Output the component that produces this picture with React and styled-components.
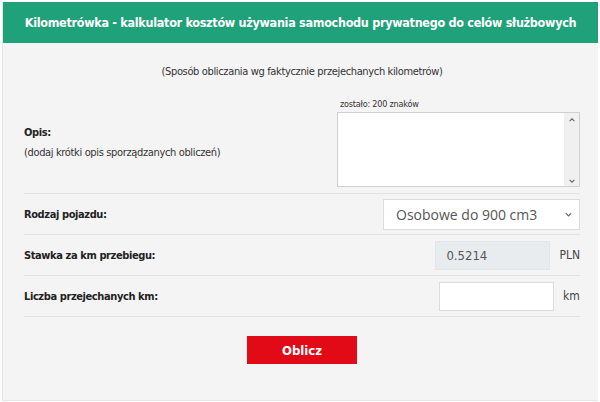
import React from "react";
import styled, { createGlobalStyle } from "styled-components";

const GlobalStyle = createGlobalStyle`
  html, body {
    margin: 0;
    padding: 0;
    background: #ffffff;
  }
  body {
    font-family: "DejaVu Sans Condensed", "DejaVu Sans", sans-serif;
    color: #333;
  }
`;

const Chevron = ({ dir = "down", size = 8 }) => (
  <svg width={size} height={size} viewBox="0 0 10 10">
    <path
      d={dir === "down" ? "M2 3.5 L5 6.5 L8 3.5" : "M2 6.5 L5 3.5 L8 6.5"}
      fill="none"
      stroke="#666"
      strokeWidth="1.3"
    />
  </svg>
);

const App = () => {
  const [desc, setDesc] = React.useState("");
  const [km, setKm] = React.useState("");

  return (
    <Page>
      <GlobalStyle />
      <Card>
        <Header>Kilometrówka - kalkulator kosztów używania samochodu prywatnego do celów służbowych</Header>
        <Body>
          <Subtitle>(Sposób obliczania wg faktycznie przejechanych kilometrów)</Subtitle>

          <Row tall>
            <Label>
              <b>Opis:</b>
              <span>(dodaj krótki opis sporządzanych obliczeń)</span>
            </Label>
            <Field>
              <Counter>zostało: {200 - desc.length} znaków</Counter>
              <TextBox>
                <TextArea
                  maxLength={200}
                  value={desc}
                  onChange={(e) => setDesc(e.target.value)}
                />
                <Scroll>
                  <Chevron dir="up" />
                  <Chevron dir="down" />
                </Scroll>
              </TextBox>
            </Field>
          </Row>

          <Row>
            <Label>
              <b>Rodzaj pojazdu:</b>
            </Label>
            <SelectBox>
              <span>Osobowe do 900 cm3</span>
              <Chevron dir="down" size={9} />
            </SelectBox>
          </Row>

          <Row>
            <Label>
              <b>Stawka za km przebiegu:</b>
            </Label>
            <Inline>
              <Input readOnly value="0.5214" $disabled />
              <Unit>PLN</Unit>
            </Inline>
          </Row>

          <Row>
            <Label>
              <b>Liczba przejechanych km:</b>
            </Label>
            <Inline>
              <Input value={km} onChange={(e) => setKm(e.target.value)} />
              <Unit>km</Unit>
            </Inline>
          </Row>

          <Actions>
            <Button>Oblicz</Button>
          </Actions>
        </Body>
      </Card>
    </Page>
  );
};

const Page = styled.div`
  width: 600px;
  height: 402px;
  padding: 2px;
  box-sizing: border-box;
`;

const Card = styled.div`
  height: 398px;
  background: #f4f4f4;
  border-left: 1px solid #e6e6e6;
  border-bottom: 1px solid #e6e6e6;
  display: flex;
  flex-direction: column;
`;

const Header = styled.div`
  height: 41px;
  background: #1fa179;
  color: #fff;
  font-weight: bold;
  font-size: 12.5px;
  letter-spacing: -0.3px;
  display: flex;
  align-items: center;
  justify-content: center;
  white-space: nowrap;
  padding-bottom: 1px;
  box-sizing: border-box;
`;

const Body = styled.div`
  padding: 0 18px 0 21px;
`;

const Subtitle = styled.div`
  text-align: center;
  font-size: 11px;
  letter-spacing: -0.35px;
  color: #333;
  margin-top: 22px;
  height: 32px;
`;

const Row = styled.div`
  display: flex;
  align-items: center;
  justify-content: space-between;
  height: ${(p) => (p.tall ? "auto" : "40px")};
  padding-bottom: ${(p) => (p.tall ? "6px" : "0")};
  border-bottom: 1px solid #e2e2e2;
`;

const Label = styled.div`
  display: flex;
  flex-direction: column;
  gap: 7px;
  font-size: 11px;
  letter-spacing: -0.35px;
  color: #333;

  b {
    font-weight: bold;
    color: #222;
    letter-spacing: -0.4px;
  }
`;

const Field = styled.div`
  display: flex;
  flex-direction: column;
  width: 243px;
`;

const Counter = styled.div`
  font-size: 9px;
  letter-spacing: -0.2px;
  color: #333;
  padding: 2px 0 0 3px;
  height: 13px;
`;

const TextBox = styled.div`
  display: flex;
  height: 73px;
  border: 1px solid #cfcfcf;
  background: #fff;
`;

const TextArea = styled.textarea`
  flex: 1;
  border: none;
  outline: none;
  resize: none;
  font-family: inherit;
  font-size: 11px;
  padding: 4px;
  overflow: hidden;
`;

const Scroll = styled.div`
  width: 15px;
  background: #f0f0f0;
  display: flex;
  flex-direction: column;
  justify-content: space-between;
  align-items: center;
  padding: 3px 0 1px;
`;

const SelectBox = styled.div`
  width: 197px;
  height: 31px;
  box-sizing: border-box;
  border: 1px solid #dcdcdc;
  background: #fff;
  display: flex;
  align-items: center;
  justify-content: space-between;
  padding: 0 6px 0 12px;
  font-size: 14px;
  color: #555;
  font-family: "Open Sans", "DejaVu Sans", sans-serif;
`;

const Inline = styled.div`
  display: flex;
  align-items: center;
  gap: 9px;
`;

const Input = styled.input`
  width: 115px;
  height: 29px;
  box-sizing: border-box;
  border: 1px solid ${(p) => (p.$disabled ? "#e3e5e8" : "#dcdcdc")};
  background: ${(p) => (p.$disabled ? "#e9ecef" : "#fff")};
  font-family: inherit;
  font-size: 13px;
  color: #555;
  padding: 0 10px;
  outline: none;
`;

const Unit = styled.span`
  font-size: 12px;
  color: #444;
  min-width: 17px;
`;

const Actions = styled.div`
  display: flex;
  justify-content: center;
  padding-top: 19px;
`;

const Button = styled.button`
  width: 110px;
  height: 28px;
  border: none;
  background: #e20a16;
  color: #fff;
  font-family: inherit;
  font-weight: bold;
  font-size: 13px;
  cursor: pointer;
`;

export default App;
